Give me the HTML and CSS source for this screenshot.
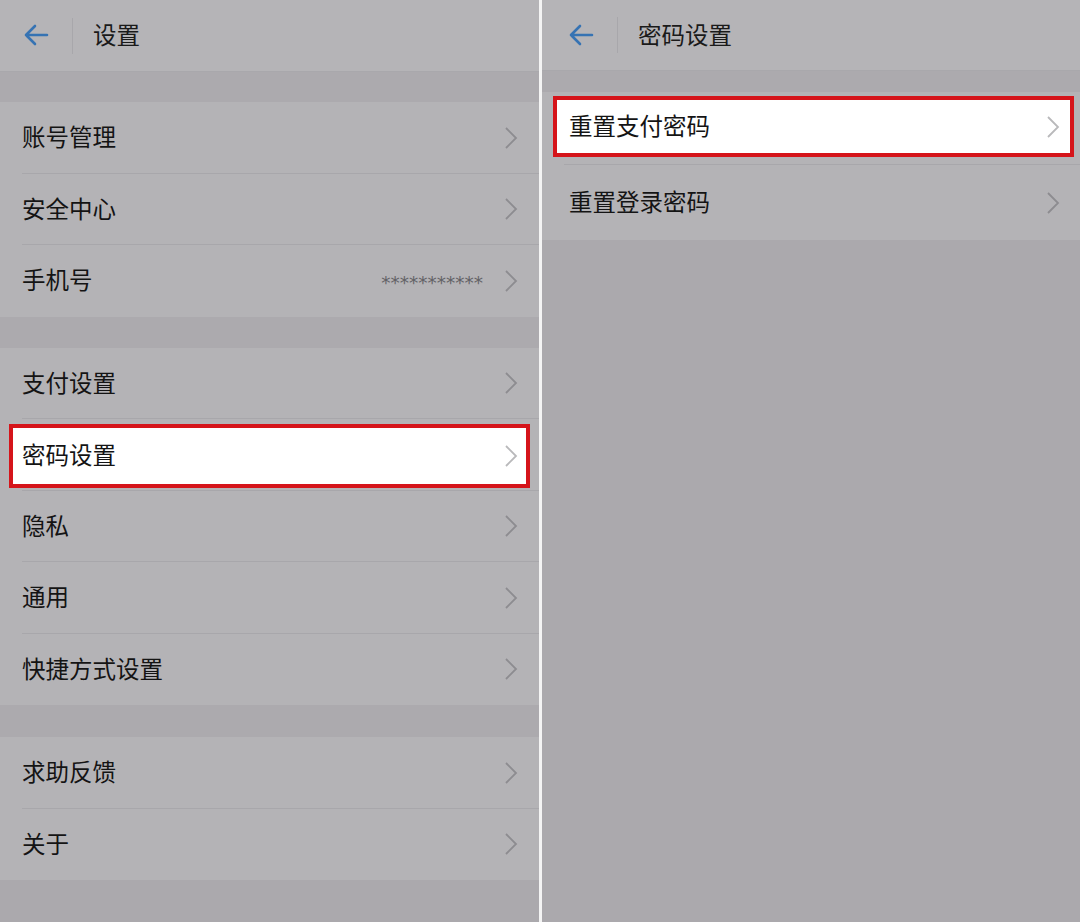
FILE: index.html
```html
<!DOCTYPE html>
<html lang="zh-CN">
<head>
<meta charset="utf-8">
<link rel="stylesheet" href="styles.css">
</head>
<body>
<div class="screen">
  <section class="panel panel-left">
    <header class="topbar">
      <svg class="back" viewBox="0 0 26 22" width="26" height="22"><path d="M24 11H3M12 2L3 11l9 9" fill="none" stroke="#3673b3" stroke-width="2.6" stroke-linecap="round" stroke-linejoin="round"/></svg>
      <span class="vdiv"></span>
      <span class="title">设置</span>
    </header>
    <div class="gap gap-a"></div>
    <div class="group">
      <div class="row"><span class="label">账号管理</span><svg class="chev" viewBox="0 0 14 24" width="14" height="24"><path d="M2 2l10 10L2 22" fill="none" stroke="#8d8c90" stroke-width="1.8"/></svg></div>
      <div class="row"><span class="label">安全中心</span><svg class="chev" viewBox="0 0 14 24" width="14" height="24"><path d="M2 2l10 10L2 22" fill="none" stroke="#8d8c90" stroke-width="1.8"/></svg></div>
      <div class="row last"><span class="label">手机号</span><span class="value">***********</span><svg class="chev" viewBox="0 0 14 24" width="14" height="24"><path d="M2 2l10 10L2 22" fill="none" stroke="#8d8c90" stroke-width="1.8"/></svg></div>
    </div>
    <div class="gap gap-b"></div>
    <div class="group">
      <div class="row"><span class="label">支付设置</span><svg class="chev" viewBox="0 0 14 24" width="14" height="24"><path d="M2 2l10 10L2 22" fill="none" stroke="#8d8c90" stroke-width="1.8"/></svg></div>
      <div class="row hl-row">
        <div class="hl-box"><span class="label">密码设置</span><svg class="chev" viewBox="0 0 14 24" width="14" height="24"><path d="M2 2l10 10L2 22" fill="none" stroke="#b9b9bb" stroke-width="1.8"/></svg></div>
      </div>
      <div class="row"><span class="label">隐私</span><svg class="chev" viewBox="0 0 14 24" width="14" height="24"><path d="M2 2l10 10L2 22" fill="none" stroke="#8d8c90" stroke-width="1.8"/></svg></div>
      <div class="row"><span class="label">通用</span><svg class="chev" viewBox="0 0 14 24" width="14" height="24"><path d="M2 2l10 10L2 22" fill="none" stroke="#8d8c90" stroke-width="1.8"/></svg></div>
      <div class="row last"><span class="label">快捷方式设置</span><svg class="chev" viewBox="0 0 14 24" width="14" height="24"><path d="M2 2l10 10L2 22" fill="none" stroke="#8d8c90" stroke-width="1.8"/></svg></div>
    </div>
    <div class="gap gap-c"></div>
    <div class="group">
      <div class="row"><span class="label">求助反馈</span><svg class="chev" viewBox="0 0 14 24" width="14" height="24"><path d="M2 2l10 10L2 22" fill="none" stroke="#8d8c90" stroke-width="1.8"/></svg></div>
      <div class="row last"><span class="label">关于</span><svg class="chev" viewBox="0 0 14 24" width="14" height="24"><path d="M2 2l10 10L2 22" fill="none" stroke="#8d8c90" stroke-width="1.8"/></svg></div>
    </div>
  </section>
  <div class="split"></div>
  <section class="panel panel-right">
    <header class="topbar">
      <svg class="back" viewBox="0 0 26 22" width="26" height="22"><path d="M24 11H3M12 2L3 11l9 9" fill="none" stroke="#3673b3" stroke-width="2.6" stroke-linecap="round" stroke-linejoin="round"/></svg>
      <span class="vdiv"></span>
      <span class="title">密码设置</span>
    </header>
    <div class="gap gap-r"></div>
    <div class="group">
      <div class="row hl-row-r">
        <div class="hl-box hl-box-r"><span class="label">重置支付密码</span><svg class="chev" viewBox="0 0 14 24" width="14" height="24"><path d="M2 2l10 10L2 22" fill="none" stroke="#b9b9bb" stroke-width="1.8"/></svg></div>
      </div>
      <div class="row last row-r2"><span class="label">重置登录密码</span><svg class="chev" viewBox="0 0 14 24" width="14" height="24"><path d="M2 2l10 10L2 22" fill="none" stroke="#8d8c90" stroke-width="1.8"/></svg></div>
    </div>
  </section>
</div>
</body>
</html>
```
FILE: styles.css
```css
* { box-sizing: border-box; }
html, body { margin: 0; padding: 0; }
body {
  width: 1080px;
  height: 922px;
  overflow: hidden;
  background: #acabaf;
  font-family: "Noto Sans CJK SC", "Noto Sans", sans-serif;
  color: #161616;
}
.screen {
  display: flex;
  width: 1080px;
  height: 922px;
}
.panel {
  display: flex;
  flex-direction: column;
  background: #aba9ad;
}
.panel-left { width: 539px; }
.panel-right { width: 538px; }
.split { width: 3px; background: #f4f4f4; }

.topbar {
  height: 72px;
  display: flex;
  align-items: center;
  background: #b5b4b7;
  border-bottom: 1px solid #a9a8ac;
  padding-left: 23px;
}
.panel-right .topbar { height: 71px; padding-left: 26px; }
.back { display: block; margin-top: -1px; }
.vdiv {
  width: 1px;
  height: 36px;
  background: #a8a7ab;
  margin-left: 23px;
  margin-right: 20px;
}
.title {
  font-size: 23.5px;
  line-height: 1;
  color: #1a1a1a;
  margin-top: -1px;
}

.gap { background: #acaaae; flex: none; }
.gap-a { height: 30px; }
.gap-b { height: 31px; }
.gap-c { height: 32px; }
.gap-r { height: 21px; }

.group { background: #b4b3b6; }
.row {
  height: 71.5px;
  display: flex;
  align-items: center;
  padding: 0 21px 0 22px;
  position: relative;
}
.row::after {
  content: "";
  position: absolute;
  left: 22px;
  right: 0;
  bottom: 0;
  height: 1px;
  background: #a8a7ab;
}
.row.last::after { display: none; }
.label {
  font-size: 23.5px;
  line-height: 1;
  flex: 1;
  color: #141414;
  margin-top: -2px;
}
.value {
  font-family: "DejaVu Sans", sans-serif;
  font-size: 18.5px;
  color: #636266;
  margin-right: 21px;
  margin-top: 4px;
}
.chev { display: block; flex: none; }

.hl-row { padding: 5px 9px 3px 9px; }
.hl-box {
  flex: 1;
  height: 100%;
  background: #ffffff;
  border: 4px solid #d5141a;
  display: flex;
  align-items: center;
  padding: 0 8px 0 9px;
}
.hl-row-r { height: 73px; padding: 4px 6px 8px 11px; }
.hl-box-r { padding: 0 10px 0 12px; }
.row-r2 { height: 75px; padding-left: 27px; padding-right: 20px; }
```
